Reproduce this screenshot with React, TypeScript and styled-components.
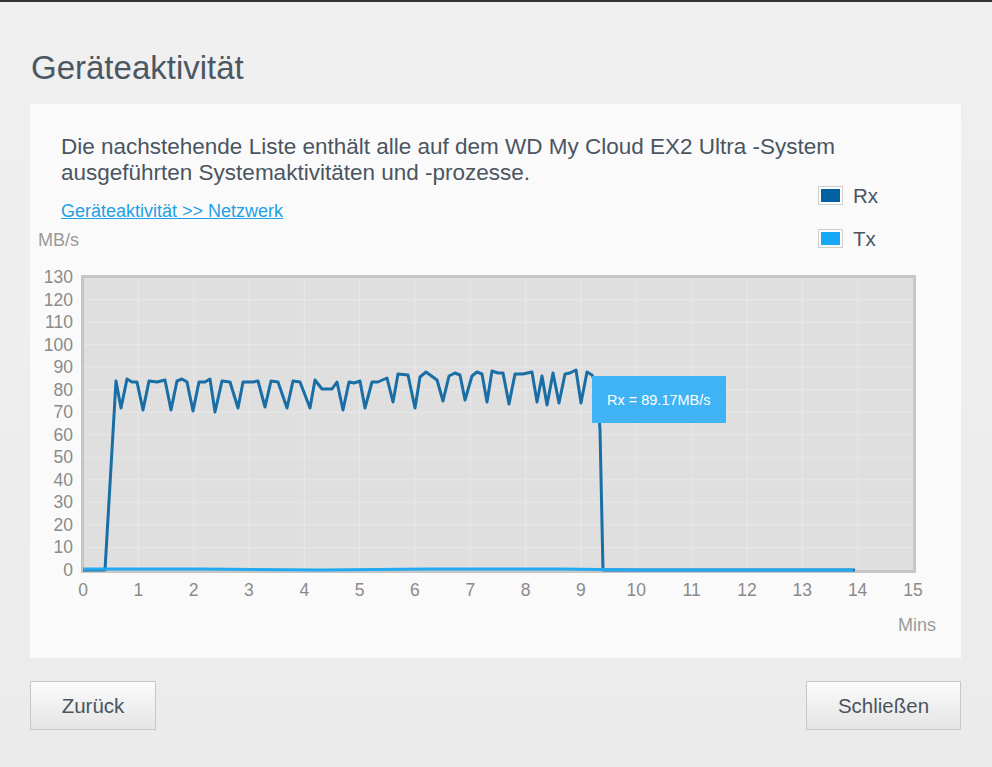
import styled, {createGlobalStyle} from "styled-components";
import {FC} from "react";

const GlobalStyle = createGlobalStyle`
  body {
    margin: 0;
    background: #efefef;
    font-family: "Liberation Sans", Arial, sans-serif;
  }
`;

const Page = styled.div`
  box-sizing: border-box;
  min-height: 767px;
  border-top: 2px solid #333;
  padding: 0 31px 0 30px;
  background: linear-gradient(#f0f0f0, #ebebeb);
`;

const Title = styled.h1`
  margin: 0 0 17px 1px;
  padding-top: 47px;
  font-size: 33px;
  line-height: 38px;
  font-weight: normal;
  color: #4b5763;
`;

const Panel = styled.div`
  box-sizing: border-box;
  height: 554px;
  padding-top: 30px;
  background: #fafafa;
`;

const Header = styled.div`
  display: flex;
  justify-content: space-between;
  align-items: flex-start;
`;

const Intro = styled.div`
  flex: 1;
  min-width: 0;
  display: flex;
  flex-direction: column;
`;

const Description = styled.p`
  margin: 0;
  padding-left: 31px;
  font-size: 22.5px;
  line-height: 26px;
  white-space: nowrap;
  color: #4a5561;
`;

const Link = styled.a`
  align-self: flex-start;
  margin: 15px 0 0 31px;
  font-size: 18px;
  line-height: 21px;
  color: #1fa0e4;
  text-decoration: underline;
  cursor: pointer;
`;

const Unit = styled.span`
  margin: 8px 0 0 8px;
  font-size: 18px;
  line-height: 21px;
  color: #9a9a9a;
`;

const Legend = styled.div`
  flex: none;
  display: flex;
  flex-direction: column;
  gap: 24px;
  width: 60px;
  margin: 52px 83px 0 0;
`;

const LegendRow = styled.div`
  display: flex;
  align-items: center;
  gap: 10px;
  height: 19px;
  font-size: 20.5px;
  color: #4a5561;
`;

const Swatch = styled.span<{ color: string }>`
  box-sizing: border-box;
  width: 25px;
  height: 19px;
  border: 1px solid #cfcfcf;
  padding: 2px;
  background: ${({color}) => color};
  background-clip: content-box;
`;

const ChartBox = styled.div`
  position: relative;
  height: 407px;

  svg {
    display: block;
  }
`;

const Tooltip = styled.div`
  position: absolute;
  left: 562px;
  top: 125px;
  box-sizing: border-box;
  width: 134px;
  height: 47px;
  padding-left: 15px;
  display: flex;
  align-items: center;
  background: #3fb3f4;
  color: #fff;
  font-size: 14.5px;
`;

const Buttons = styled.div`
  display: flex;
  justify-content: space-between;
  margin-top: 23px;
`;

const Button = styled.button<{ width: number }>`
  width: ${({width}) => width}px;
  height: 49px;
  border: 1px solid #c8c8c8;
  background: linear-gradient(#fbfbfb, #e5e5e5);
  font-family: "Liberation Sans", Arial, sans-serif;
  font-size: 20.5px;
  color: #4a5561;
  cursor: pointer;
`;

// plot geometry in page pixels (the svg viewBox uses page coordinates)
const X0 = 83;
const MIN = 55.33;
const Y0 = 570;
const UNIT = 2.254;

const rx =
    "83,570 105,570 116,381 121,408 127,379 132,382 137,382 143,410 149,381 157,382 165,380 171,410 " +
    "177,381 182,379 187,382 193,411 199,382 205,382 210,379 215,412 222,381 230,382 238,408 243,382 " +
    "253,382 258,381 265,407 271,381 278,382 287,408 293,381 300,382 310,408 315,380 322,389 332,389 " +
    "337,382 343,410 349,382 354,383 360,381 365,408 372,382 378,382 387,378 393,402 398,374 408,375 " +
    "415,408 420,377 426,372 437,380 443,401 449,376 455,373 460,375 465,400 472,376 477,372 482,374 " +
    "487,402 492,371 498,373 503,373 509,404 515,374 523,374 532,372 537,402 542,376 547,405 553,373 " +
    "559,403 565,374 570,373 576,370 581,403 587,372 592,375 597,386 600,430 603,570 855,570";

const tx = "83,569 200,569 320,570 430,569 560,569 640,570 760,570 853,570";

const Chart: FC = () => {
    const minutes = Array.from({length: 16}, (_, i) => i);
    const values = Array.from({length: 14}, (_, i) => i * 10);

    return (
        <ChartBox>
            <svg width={931} height={407} viewBox="30 251 931 407">
                <rect x={82.5} y={276.5} width={832} height={295} fill="#dfdfdf" stroke="#c6c6c6" strokeWidth={3}/>
                {minutes.slice(1, 15).map((m) => (
                    <line key={m} x1={X0 + m * MIN} x2={X0 + m * MIN} y1={278} y2={570} stroke="#e8e8e8" strokeWidth={1}/>
                ))}
                {values.slice(1, 13).map((v) => (
                    <line key={v} x1={84} x2={913} y1={Y0 - v * UNIT} y2={Y0 - v * UNIT} stroke="#e8e8e8" strokeWidth={1}/>
                ))}
                <polyline points={rx} fill="none" stroke="#1a6ea6" strokeWidth={3} strokeLinejoin="round"/>
                <polyline points={tx} fill="none" stroke="#22a9f0" strokeWidth={3} strokeLinejoin="round"/>
                <g fontFamily="Liberation Sans, Arial, sans-serif" fontSize={17.5} fill="#8a8a8a">
                    {values.map((v) => (
                        <text key={v} x={73} y={Y0 - v * UNIT + 6} textAnchor="end">{v}</text>
                    ))}
                    {minutes.map((m) => (
                        <text key={m} x={X0 + m * MIN} y={596} textAnchor="middle">{m}</text>
                    ))}
                    <text x={936} y={631} textAnchor="end" fontSize={18} fill="#9a9a9a">Mins</text>
                </g>
            </svg>
            <Tooltip>Rx = 89.17MB/s</Tooltip>
        </ChartBox>
    );
};

export default function App() {
    return (
        <>
            <GlobalStyle/>
            <Page>
                <Title>Geräteaktivität</Title>
                <Panel>
                    <Header>
                        <Intro>
                            <Description>
                                Die nachstehende Liste enthält alle auf dem WD My Cloud EX2 Ultra -System<br/>
                                ausgeführten Systemaktivitäten und -prozesse.
                            </Description>
                            <Link>Geräteaktivität &gt;&gt; Netzwerk</Link>
                            <Unit>MB/s</Unit>
                        </Intro>
                        <Legend>
                            <LegendRow><Swatch color="#0061a0"/>Rx</LegendRow>
                            <LegendRow><Swatch color="#16a9f7"/>Tx</LegendRow>
                        </Legend>
                    </Header>
                    <Chart/>
                </Panel>
                <Buttons>
                    <Button width={126}>Zurück</Button>
                    <Button width={155}>Schließen</Button>
                </Buttons>
            </Page>
        </>
    );
}
